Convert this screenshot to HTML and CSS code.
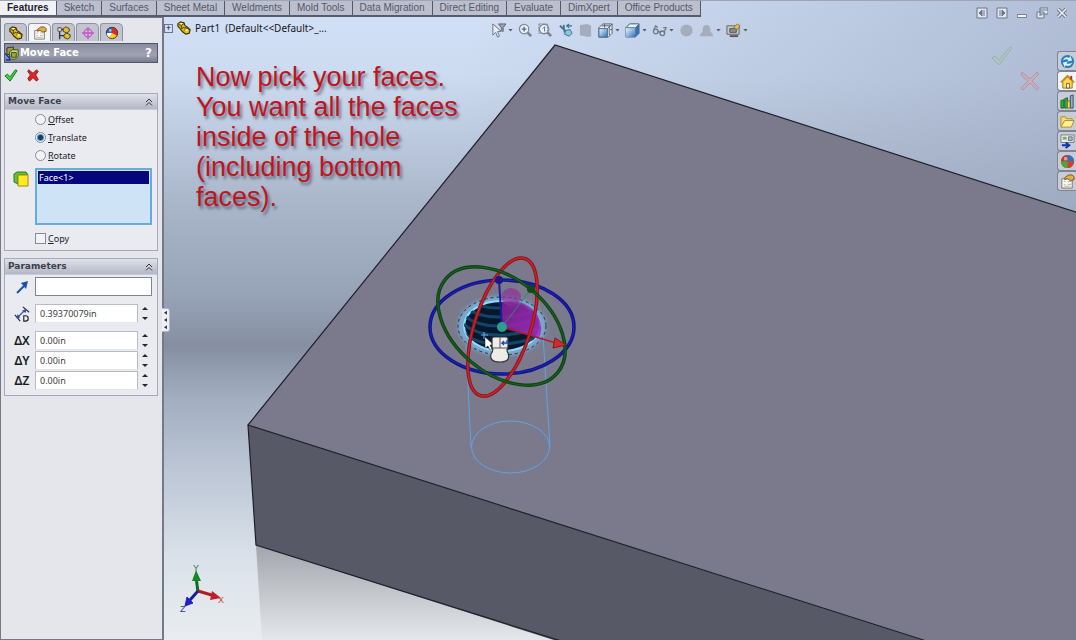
FILE: index.html
```html
<!DOCTYPE html>
<html lang="en">
<head>
<meta charset="utf-8">
<title>Part1 - Move Face</title>
<link rel="stylesheet" href="styles.css">
</head>
<body>
<svg class="defs" aria-hidden="true">
  <defs>
    <linearGradient id="steel" x1="0" y1="0" x2="1" y2="1"><stop offset="0" stop-color="#eef8ff"/><stop offset="1" stop-color="#2d73b8"/></linearGradient>
    <symbol id="part" viewBox="0 0 16 16"><path d="M1 3l3-2 4 1 1 3 3 2 3 3-1 4-4 1-4-3-3-4-2-2z" fill="#e3bd1c" stroke="#3b3208" stroke-width="1.300"/><path d="M2 4l3 1v4M5 5l3-2M8 11l3-3 3 2M8 8l3-1M5 9l3-2" fill="none" stroke="#3b3208"/><path d="M3 3l2-1 2 1-2 1zM9 10l2-1 2 1-2 2z" fill="#fff09a"/></symbol>
    <symbol id="props" viewBox="0 0 16 16"><path d="M2 5h11v10H2z" fill="#fffdf4" stroke="#77736d"/><path d="M4 8h2M8 8h4M4 11h2M8 11h4M4 13h7" stroke="#b0acb2"/><path d="M5 4l4-3h4l2 2v3l-4 1-3-2-3 1z" fill="#e0ad4a" stroke="#765320"/></symbol>
    <symbol id="ball" viewBox="0 0 16 16"><circle cx="8" cy="8" r="7" fill="#f4ce27"/><path d="M8 8V1a7 7 0 0 0-7 7z" fill="#2869be"/><path d="M8 8V1a7 7 0 0 1 6 10z" fill="#da2b24"/><path d="M8 8H1a7 7 0 0 0 3 6z" fill="#fff"/><circle cx="8" cy="8" r="6.500" fill="none" stroke="#46362e"/><circle cx="6" cy="5" r="1.500" fill="#fff" opacity=".6"/></symbol>
    <symbol id="globe" viewBox="0 0 16 16"><circle cx="8" cy="8" r="7" fill="#38a342"/><path d="M8 8V1a7 7 0 0 0-7 7z" fill="#da2b24"/><path d="M8 8V1a7 7 0 0 1 7 7z" fill="#2f6fc4"/><path d="M8 8h7a7 7 0 0 1-7 7z" fill="#e0392d"/><path d="M8 8v7a7 7 0 0 1-7-7z" fill="#47a83f"/><circle cx="6" cy="5" r="2" fill="#fff" opacity=".5"/></symbol>
    <symbol id="lens" viewBox="0 0 16 16"><path d="M10 10l4 4" stroke="#7c8492" stroke-width="3"/><circle cx="6.500" cy="6.500" r="5" fill="#e9f2fb" stroke="#7e8795" stroke-width="1.300"/></symbol>
    <symbol id="up2" viewBox="0 0 8 8"><path d="M1 4l3-3 3 3M1 7.500l3-3 3 3" fill="none" stroke="#33343e"/></symbol>
  </defs>
</svg>
<div class="app">
  <header class="topbar">
    <nav class="tabs" aria-label="Command manager">
      <button class="tab tab-active">Features</button><button class="tab">Sketch</button><button class="tab">Surfaces</button><button class="tab">Sheet Metal</button><button class="tab">Weldments</button><button class="tab">Mold Tools</button><button class="tab">Data Migration</button><button class="tab">Direct Editing</button><button class="tab">Evaluate</button><button class="tab">DimXpert</button><button class="tab">Office Products</button>
    </nav>
    <div class="window-controls">
      <button aria-label="Collapse left"><svg viewBox="0 0 12 12"><path d="M1 1h10v10H1z" fill="#e1e7f0" stroke="#6c7789"/><path d="M6 3v6L3 6zM8 3v6" fill="#6c7789" stroke="#6c7789"/></svg></button>
      <button aria-label="Collapse right"><svg viewBox="0 0 12 12"><path d="M1 1h10v10H1z" fill="#e1e7f0" stroke="#6c7789"/><path d="M6 3v6l3-3zM4 3v6" fill="#6c7789" stroke="#6c7789"/></svg></button>
      <button aria-label="Minimize"><svg viewBox="0 0 12 12"><path d="M1.500 7.500h9v3h-9z" fill="#f2f5fa" stroke="#788294"/></svg></button>
      <button aria-label="Restore"><svg viewBox="0 0 12 12"><path d="M4 1h8v6H4zM1 5h7v6H1z" fill="#e4e9f2" stroke="#6c7789"/><path d="M4 3h8M3 8h3" stroke="#6c7789"/></svg></button>
      <button aria-label="Close"><svg viewBox="0 0 12 12"><path d="M2 2l8 8M10 2l-8 8" stroke="#707a8b" stroke-width="3.500"/><path d="M2 2l8 8M10 2l-8 8" stroke="#edf1f7" stroke-width="1.500"/></svg></button>
    </div>
  </header>

  <div class="workspace">
    <aside class="panel">
      <div class="manager-tabs">
        <button class="mtab" aria-label="Feature tree"><svg viewBox="0 0 16 16"><use href="#part"/></svg></button>
        <button class="mtab mtab-active" aria-label="Property manager"><svg viewBox="0 0 16 16"><use href="#props"/></svg></button>
        <button class="mtab" aria-label="Configurations"><svg viewBox="0 0 16 16"><path d="M3 1v14M3 4h5M3 11h5" stroke="#333" stroke-width="1.500"/><path d="M1 2h4v4H1z" fill="#ddd" stroke="#555"/><path d="M7 3l3-2 4 2v3l-3 2-4-2zM8 10l3-2 4 2v3l-3 2-4-2z" fill="#e2c12d" stroke="#3d3611"/></svg></button>
        <button class="mtab" aria-label="DimXpert"><svg viewBox="0 0 16 16"><circle cx="8" cy="8" r="4.500" fill="none" stroke="#c652cf" stroke-width="1.400"/><path d="M8 1v14M1 8h14" stroke="#c652cf" stroke-width="1.500"/></svg></button>
        <button class="mtab" aria-label="Display"><svg viewBox="0 0 16 16"><use href="#ball"/></svg></button>
      </div>
      <div class="title">
        <svg viewBox="0 0 16 16"><path d="M2 2l7-1v8H2z" fill="#9aa04d" stroke="#33361d"/><path d="M5 6l3-2h6v7l-3 3H5z" fill="#d5d75a" stroke="#40461b"/><path d="M7 7h5v5H7z" fill="#97aa57" stroke="#40461b"/><path d="M0 8l5 5M5 10v5H1" fill="none" stroke="#1538b5" stroke-width="1.500"/></svg>
        <h1>Move Face</h1><button aria-label="Help">?</button>
      </div>
      <div class="confirm">
        <button aria-label="OK"><svg viewBox="0 0 16 16"><path d="M1 9l3-2 3 3 6-8 2 1-8 12z" fill="#3bcf3b" stroke="#166c1c"/></svg></button>
        <button aria-label="Cancel"><svg viewBox="0 0 16 16"><path d="M3 2l5 4 4-4 2 2-3 4 3 5-2 2-4-4-4 4-2-3 3-4-3-4z" fill="#df2525" stroke="#861818"/></svg></button>
      </div>

      <section class="group">
        <h2>Move Face<svg viewBox="0 0 8 8"><use href="#up2"/></svg></h2>
        <div class="options">
          <label><input type="radio" name="mode"><span><u>O</u>ffset</span></label>
          <label><input type="radio" name="mode" checked><span><u>T</u>ranslate</span></label>
          <label><input type="radio" name="mode"><span><u>R</u>otate</span></label>
        </div>
        <div class="selection">
          <svg viewBox="0 0 16 16"><path d="M1 3l3-2h9l2 3H5v9l-4-2z" fill="#55c83d" stroke="#39751b"/><path d="M5 4h10v11H5z" fill="#ffeb23" stroke="#a48a0c"/></svg>
          <select class="faces" multiple size="3" aria-label="Faces"><option selected>Face&lt;1&gt;</option></select>
        </div>
        <div class="copy"><label><input type="checkbox"><span><u>C</u>opy</span></label></div>
      </section>

      <section class="group">
        <h2>Parameters<svg viewBox="0 0 8 8"><use href="#up2"/></svg></h2>
        <div class="params">
          <div class="row row-wide">
            <label for="dir" aria-label="Direction"><svg viewBox="0 0 16 16"><path d="M3 14l7-7" stroke="#1c4eaa" stroke-width="2"/><path d="M7 4l7-2-2 8z" fill="#1c4eaa"/></svg></label>
            <input id="dir" type="text">
          </div>
          <div class="row row-wide">
            <label for="dist" aria-label="Distance"><svg viewBox="0 0 18 18"><path d="M1 10l6 7M10 1l7 6" stroke="#252b38" stroke-width="1.300"/><path d="M4 13l9-9" stroke="#3f5eaa" stroke-width="1.500"/><path d="M3 14l1-5 3 4zM14 4l-5 1 4 3z" fill="#334f9c"/><path d="M11 11h2q3 0 3 3t-3 3h-2z" fill="none" stroke="#222" stroke-width="1.300"/></svg></label>
            <input id="dist" type="text" value="0.39370079in"><span class="spin"><button aria-label="Increase distance"></button><button aria-label="Decrease distance"></button></span>
          </div>
          <div class="row"><label for="dx">ΔX</label><input id="dx" type="text" value="0.00in"><span class="spin"><button aria-label="Increase X"></button><button aria-label="Decrease X"></button></span></div>
          <div class="row"><label for="dy">ΔY</label><input id="dy" type="text" value="0.00in"><span class="spin"><button aria-label="Increase Y"></button><button aria-label="Decrease Y"></button></span></div>
          <div class="row"><label for="dz">ΔZ</label><input id="dz" type="text" value="0.00in"><span class="spin"><button aria-label="Increase Z"></button><button aria-label="Decrease Z"></button></span></div>
        </div>
      </section>
      <button class="splitter" aria-label="Collapse panel"><i></i><i></i><i></i></button>
    </aside>

    <main class="viewport">
      <svg class="scene" viewBox="164 17 912 623" preserveAspectRatio="xMinYMin slice" role="img" aria-label="Block with hole">
        <defs>
          <linearGradient id="shade" x1="0" y1="0" x2="0" y2="1"><stop offset="0" stop-color="#a2a6ac"/><stop offset="1" stop-color="#e4e8ec"/></linearGradient>
          <linearGradient id="magenta" x1="0" y1="0" x2="1" y2="1"><stop offset="0" stop-color="#7d1d91"/><stop offset="1" stop-color="#a52fc0"/></linearGradient>
          <clipPath id="bore"><ellipse cx="502" cy="326" rx="38" ry="25"/></clipPath>
          <filter id="soft" x="-30%" y="-30%" width="160%" height="160%"><feGaussianBlur stdDeviation="2"/></filter>
        </defs>
        <path d="M256 545L262 640H600z" fill="url(#shade)"/>
        <path d="M248 425L1000 665H632L256 545z" fill="#575a66"/>
        <path d="M555 45L1300 284V760L248 425z" fill="#7a7a8c"/>
        <path d="M1300 284L555 45 248 425 1300 760M248 425L256 545 1000 779" fill="none" stroke="#1d2029" stroke-width="1.200"/>
        <g fill="none" stroke="#5fa3e6">
          <path d="M466 345L471 447M543 335L550 447"/>
          <ellipse cx="510.500" cy="447" rx="39" ry="26"/>
        </g>
        <ellipse cx="502" cy="326" rx="41" ry="27" fill="none" stroke="#78c3f5" stroke-width="4" filter="url(#soft)"/>
        <ellipse cx="502" cy="326" rx="38" ry="25" fill="#06182b" stroke="#8fdcff" stroke-width="2"/>
        <g clip-path="url(#bore)" fill="none" stroke="#114668" stroke-width="3">
          <path d="M462 296q25 22 80 4M462 305q25 22 80 4M462 314q25 22 80 4M462 323q25 22 80 4M462 332q25 22 80 4M462 341q25 22 80 4"/>
        </g>
        <ellipse cx="502" cy="326" rx="44" ry="29" fill="none" stroke="#24344d" stroke-dasharray="3 3"/>
        <path d="M502 326V302q24-4 36 14 6 12 1 22z" fill="url(#magenta)" opacity=".9"/>
        <ellipse cx="511" cy="297" rx="10" ry="9" fill="#8e3295" opacity=".7"/>
        <path d="M502 327L531 289" stroke="#2b8b68"/>
        <g fill="none" stroke-width="3.500">
          <ellipse cx="502" cy="327" rx="72" ry="47" stroke="#10148c"/>
          <ellipse cx="502" cy="327" rx="72" ry="47" stroke="#2026b4" stroke-width="1"/>
          <g transform="translate(502.500 327) rotate(18)"><ellipse rx="28" ry="72" stroke="#8e1219"/><ellipse rx="28" ry="72" stroke="#c8252c" stroke-width="1.500"/></g>
          <g transform="translate(501.500 326) rotate(40)"><ellipse rx="73" ry="47" stroke="#0c4312"/><ellipse rx="73" ry="47" stroke="#1d6326" stroke-width="1"/></g>
        </g>
        <path d="M502 327L499 280" stroke="#1c1ca0" stroke-width="2"/><circle cx="499" cy="280" r="4" fill="#18188c"/>
        <circle cx="531" cy="289" r="4" fill="#0f4a18"/>
        <path d="M502 327L556 343" stroke="#b31d2a" stroke-width="1.500"/><path d="M555 338l11 7-13 3z" fill="#d32b2b" stroke="#851a1a"/>
        <circle cx="502" cy="327" r="5" fill="#2ba092"/>
        <path d="M484 332v7M481 335h7" stroke="#6badff"/>
        <path d="M485 337v11l3-2 2 4 2-1-2-4h4z" fill="#fff" stroke="#222" stroke-width=".5"/>
        <path d="M492 339q0-2 2-2h12q2 0 2 2v8q-2 3 0 6 3 9-8 9t-9-8q3-4 1-7z" fill="#eeece6" stroke="#33343b" stroke-width="1.200"/>
        <path d="M500 337v11M491 348h17" stroke="#555"/><path d="M507 340v3h-5l2-2m-2 2l2 2" fill="none" stroke="#2541b5" stroke-width="1.300"/>
        <g class="axis">
          <path d="M198 592l-2-15" stroke="#146a20" stroke-width="3"/><path d="M196 570l5 11h-9z" fill="#17852b"/>
          <path d="M198 591l17 5" stroke="#b71920" stroke-width="3"/><path d="M212 591l9 7-11 2z" fill="#c02027"/>
          <path d="M198 591l-8 9" stroke="#17209b" stroke-width="3"/><path d="M187 597l6 6-8 3z" fill="#2020c8" stroke="#2020c8"/>
          <text x="193" y="571" fill="#3d7b48">Y</text><text x="218" y="603" fill="#d33a42">X</text><text x="180" y="612" fill="#2832a0">Z</text>
        </g>
      </svg>
      <div class="heads-up">
        <div class="tree"><button class="expand" aria-label="Expand">+</button><svg viewBox="0 0 16 16"><use href="#part"/></svg><span>Part1&nbsp; (Default&lt;&lt;Default&gt;_...</span></div>
        <div class="tools">
          <button class="drop" aria-label="Selection filter"><svg viewBox="0 0 16 16"><path d="M2 1v12l3-3 2 5 2-1-2-5h4z" fill="#e9edf5" stroke="#697080"/><path d="M8 1h8l-3 4v4l-2-1V5z" fill="#9aa2af" stroke="#5c6474"/></svg></button>
          <button aria-label="Zoom to fit"><svg viewBox="0 0 16 16"><use href="#lens"/><path d="M4 6.500h5M6.500 4v5" stroke="#606a79" stroke-width="1.500"/></svg></button>
          <button aria-label="Zoom to area"><svg viewBox="0 0 16 16"><use href="#lens"/><path d="M1 1h9v10H1z" fill="none" stroke="#757e8c" stroke-dasharray="2 1"/><path d="M5 6l2-2v5" fill="none" stroke="#606a79"/></svg></button>
          <button aria-label="Previous view"><svg viewBox="0 0 16 16"><path d="M2 3l10 9M6 2l1 8" stroke="#4a7590" stroke-width="2"/><path d="M8 8l5-1 2 4-3 3-5-2z" fill="#89c9d9" stroke="#347390"/><path d="M15 3H9m0 0l3-2M9 3l3 2" fill="none" stroke="#327a94" stroke-width="1.300"/></svg></button>
          <button aria-label="Section view"><svg viewBox="0 0 16 16"><path d="M2 2l8-1 4 2v11l-3 1-9-2z" fill="#a3adbd"/></svg></button>
          <button class="drop" aria-label="View orientation"><svg viewBox="0 0 16 16"><path d="M1 5l4-4h10v10l-4 4H1z" fill="#e8edf3" stroke="#52606e"/><path d="M1 6h9v9H1z" fill="url(#steel)" stroke="#416a8c"/><path d="M10 6l5-5M4 3h10M12 4v9M7 1v4M13 7h2" stroke="#52606e"/></svg></button>
          <button class="drop" aria-label="Display style"><svg viewBox="0 0 16 16"><path d="M1 5l4-4h10v10l-4 4H1z" fill="#376fb6" stroke="#52698a"/><path d="M1 5h10v10H1z" fill="url(#steel)"/><path d="M1 5l4-4h10l-4 4z" fill="#e7f1fa" stroke="#63758b"/></svg></button>
          <button class="drop" aria-label="Hide or show"><svg viewBox="0 0 16 16"><g fill="none" stroke="#6e7887" stroke-width="1.400"><circle cx="4" cy="9" r="2.500"/><circle cx="11" cy="11" r="2.500"/><path d="M2 7l2-4 2 2M6 9l3 1M13 10l2-5h-3"/></g></svg></button>
          <button aria-label="Appearance"><svg viewBox="0 0 16 16"><circle cx="8" cy="8" r="6.500" fill="#a5adbb"/></svg></button>
          <button class="drop" aria-label="Scene"><svg viewBox="0 0 16 16"><path d="M1 14q0-3 3-5-1-7 4-7t4 7q3 2 3 5z" fill="#a5adbb"/></svg></button>
          <button class="drop" aria-label="View settings"><svg viewBox="0 0 16 16"><path d="M1 3h13v9H1z" fill="#c8cbcc" stroke="#5e6063"/><path d="M4 6h7v4H4z" fill="#888f91" stroke="#555"/><path d="M4 14h9" stroke="#555" stroke-width="2"/><path d="M8 5l4-4 3 2-3 4z" fill="#e3bd55" stroke="#8b713c"/></svg></button>
        </div>
      </div>
      <p class="callout">Now pick your faces. You want all the faces inside of the hole (including bottom faces).</p>
      <div class="corner">
        <button aria-label="Accept"><svg viewBox="0 0 20 20"><path d="M0 12l3-2 4 4L18 1l2 1L7 19z" fill="#b1c4c5" stroke="#98b3a8"/></svg></button>
        <button aria-label="Reject"><svg viewBox="0 0 20 20"><path d="M2 1l8 7 7-7 2 2-7 7 7 7-2 2-7-7-7 7-2-2 7-7-7-6z" fill="#c7aebf" stroke="#b893a4"/></svg></button>
      </div>
      <nav class="taskpane" aria-label="Task pane">
        <button aria-label="Resources"><svg viewBox="0 0 16 16"><circle cx="8" cy="8" r="7" fill="#2b7dbe"/><path d="M3 7q2-5 7-3l1-2 2 5-5 1 1-2q-3-1-6 1zM13 9q-2 5-7 3l-1 2-2-5 5-1-1 2q3 1 6-1z" fill="#d9f5ff"/></svg></button>
        <button class="active" aria-label="Home"><svg viewBox="0 0 16 16"><path d="M3 8v7h10V8L8 3z" fill="#ffd950" stroke="#967220"/><path d="M1 9l7-7 7 7" fill="none" stroke="#c18d1e" stroke-width="2"/><path d="M12 2v4" stroke="#b53323" stroke-width="2"/><path d="M7 10h3v5H7z" fill="#fff" stroke="#755b2b"/></svg></button>
        <button aria-label="Design library"><svg viewBox="0 0 16 16"><path d="M1 7l3-1v9H1zM5 5l3-1v11H5z" fill="#35aa3d" stroke="#1d6628"/><path d="M8 8l3-1v8H8z" fill="#f0dc43" stroke="#89771f"/><path d="M11 2l3-1v14h-3z" fill="#8fb4c8" stroke="#344e66"/></svg></button>
        <button aria-label="File explorer"><svg viewBox="0 0 16 16"><path d="M1 13V3h5l1 2h6v3" fill="#f9dc67" stroke="#a88b2e"/><path d="M1 14l4-7h10l-3 7z" fill="#fff29b" stroke="#a88b2e"/></svg></button>
        <button aria-label="View palette"><svg viewBox="0 0 16 16"><path d="M1 1h14v8H1z" fill="#e8eced" stroke="#747a7a"/><path d="M3 3h4v3H3z" fill="#7da864"/><path d="M9 3h4v4H9z" fill="#abb6be" stroke="#697680"/><path d="M2 12h7M6 9l4 3-4 3" fill="none" stroke="#1532b1" stroke-width="2"/></svg></button>
        <button aria-label="Appearances"><svg viewBox="0 0 16 16"><use href="#globe"/></svg></button>
        <button aria-label="Custom properties"><svg viewBox="0 0 16 16"><use href="#props"/></svg></button>
      </nav>
    </main>
  </div>
</div>
</body>
</html>
```
FILE: styles.css
```css
* { box-sizing: border-box; }
body { margin: 0; font-family: "Noto Sans", sans-serif; font-size: 9px; color: #22232b; }
button { margin: 0; padding: 0; border: 0; background: none; color: inherit; font: inherit; }
svg { display: block; }
.defs { position: absolute; width: 0; height: 0; }

.app {
  display: flex;
  flex-direction: column;
  min-height: 100vh;
  overflow: hidden;
  background:
    linear-gradient(100deg, transparent 40%, rgba(150, 163, 187, .6) 95%),
    linear-gradient(#d3e1f8 0, #cddbf1 12%, #a9b6ca 32%, #97a3b7 46%, #868fa2 54%, #a2adc0 62%, #bdc7d6 74%, #dae1e9 87%, #e9edf1 100%);
}
.topbar { display: flex; justify-content: space-between; height: 17px; padding-right: 8px; border-top: 1px solid #9da5b6; }
.tabs { display: flex; background: #bcbfcd; border-bottom: 2px solid #555a6c; }
.tab { padding: 0 7px 1px; border-right: 1px solid #545869; color: #55586a; font: 10px/13px "Liberation Sans", sans-serif; white-space: nowrap; }
.tab-active { background: #f0f2f7; color: #22242d; font-weight: bold; }
.window-controls { display: flex; gap: 8px; padding-top: 6px; }
.window-controls svg { width: 12px; height: 12px; }

.workspace { display: flex; flex: 1; }
.panel { position: relative; z-index: 1; flex: none; width: 164px; padding: 3px 4px 0 3px; background: #e4e6ec; border: solid #747988; border-width: 1px 2px 1px 1px; }
.manager-tabs { display: flex; gap: 1px; height: 20px; padding-top: 2px; }
.mtab { display: grid; place-items: center; width: 23px; background: #c2c5d0; border: 1px solid #8d91a0; border-bottom: 0; border-radius: 3px 5px 0 0; }
.mtab-active { background: #f4f5f8; }
.mtab svg { width: 14px; height: 14px; }
.title { display: flex; align-items: center; height: 20px; margin: 2px 0 0; padding-right: 5px; background: linear-gradient(#8a8d9f, #9fa3b4 60%, #777b8e); border: 1px solid #50566b; color: #fff; }
.title svg { width: 15px; height: 15px; }
.title h1 { flex: 1; margin: 0; font: bold 11px/18px "DejaVu Sans Condensed", "DejaVu Sans", sans-serif; }
.title button { font: bold 12px/18px "DejaVu Sans", sans-serif; }
.confirm { display: flex; align-items: flex-start; gap: 8px; height: 30px; padding-top: 5px; }
.confirm svg { width: 14px; height: 14px; }

.group { margin-bottom: 7px; background: #e9ebf0; border: 1px solid #a6a9b6; }
.group h2 { display: flex; align-items: center; justify-content: space-between; height: 16px; margin: 0; padding: 0 4px 0 3px; background: linear-gradient(#dee1e8, #b4b8c6); border-bottom: 1px solid #c9ccd6; color: #3c3f4d; font: bold 9px/15px "DejaVu Sans", sans-serif; }
.group h2 svg { width: 8px; height: 8px; }
.options { display: flex; flex-direction: column; gap: 4px; padding: 2px 0 6px 30px; }
.options label, .copy label { display: flex; align-items: center; gap: 2px; height: 14px; }
input[type="radio"], input[type="checkbox"] { appearance: none; width: 11px; height: 11px; margin: 0; background: #f2f3f5; border: 1px solid #868b98; }
input[type="radio"] { border-radius: 50%; }
input[type="radio"]:checked { background: radial-gradient(circle, #123f67 0 2px, #4f91b8 3px, #eef3f7 4px); }
.selection { display: flex; gap: 6px; padding: 0 5px 0 8px; }
.selection svg { flex: 0 0 16px; height: 16px; margin-top: 3px; }
.faces { flex: 1; min-width: 0; height: 57px; padding: 1px; overflow: hidden; background: #cfe3f7; border: 2px solid #67abd9; border-radius: 0; outline: 0; font: 9px/11px "Noto Sans", sans-serif; }
.faces option { min-height: 11px; padding: 0 1px; }
.faces option:checked { background: linear-gradient(#05057c, #05057c); color: #fff; }
.copy { padding: 6px 0 5px 30px; }

.params { display: flex; flex-direction: column; gap: 1px; padding: 2px 5px 5px 4px; }
.row { display: flex; align-items: center; height: 19px; }
.row-wide { margin-bottom: 7px; }
.row label { display: grid; flex: 0 0 26px; place-items: center; color: #191a20; font: 600 12px/19px "Noto Sans", sans-serif; }
.row label svg { width: 16px; height: 16px; }
.row input { flex: 1; min-width: 0; height: 19px; padding: 0 4px; background: #fff; border: 1px solid #b9bcc6; border-bottom-color: #e5e6ea; border-radius: 0; color: #3b3c43; font: 9px/15px "Noto Sans", sans-serif; }
.row #dir { border-color: #7f8492; }
.spin { display: flex; flex: 0 0 14px; flex-direction: column; justify-content: space-between; align-items: center; height: 13px; }
.spin button { width: 6px; height: 3px; background: #262730; clip-path: polygon(50% 0, 100% 100%, 0 100%); }
.spin button + button { clip-path: polygon(0 0, 100% 0, 50% 100%); }
.splitter { position: absolute; top: 290px; right: -8px; display: flex; flex-direction: column; align-items: center; justify-content: space-around; width: 8px; height: 24px; background: #edf0f4; border: 1px solid #b3b8c4; border-left: 0; border-radius: 0 3px 3px 0; }
.splitter i { width: 3px; height: 4px; background: #333743; clip-path: polygon(100% 0, 100% 100%, 0 50%); }

.viewport { position: relative; flex: 1; min-width: 0; }
.scene { position: absolute; inset: 0; width: 100%; height: 100%; }
.axis text { font: 9px "Liberation Sans", sans-serif; }
.heads-up { position: relative; display: grid; grid-template-columns: auto 5fr auto 7fr auto; padding: 2px 98px 0 0; }
.tree { display: flex; align-items: center; gap: 4px; height: 18px; color: #14151b; font-size: 10px; white-space: nowrap; }
.tree svg { width: 14px; height: 14px; }
.expand { width: 9px; height: 9px; border: 1px solid #6d7485; font: 9px/7px "Liberation Sans", sans-serif; }
.tools { display: flex; grid-column: 3; align-items: center; gap: 5px; height: 22px; }
.tools button { display: flex; align-items: center; gap: 2px; }
.tools svg { width: 15px; height: 15px; }
.drop::after { content: ""; width: 5px; height: 3px; background: #555d6d; clip-path: polygon(0 0, 100% 0, 50% 100%); }
.callout { position: relative; width: 270px; margin: 21px 0 0 32px; color: #bf1521; font: 27px/30px "Liberation Sans", sans-serif; text-shadow: 2px 3px 3px rgba(60, 65, 85, .65); }
.corner { position: absolute; top: 29px; right: 36px; display: flex; align-items: flex-start; gap: 8px; }
.corner svg { width: 20px; height: 20px; }
.corner button + button { padding-top: 25px; }
.taskpane { position: absolute; top: 34px; right: 0; display: flex; flex-direction: column; width: 19px; }
.taskpane button { display: grid; place-items: center; height: 20px; background: #c8ccd7; border: 1px solid #7f8493; border-right: 0; border-radius: 3px 0 0 3px; }
.taskpane .active { background: #f2f4f7; }
.taskpane svg { width: 15px; height: 15px; }
```
